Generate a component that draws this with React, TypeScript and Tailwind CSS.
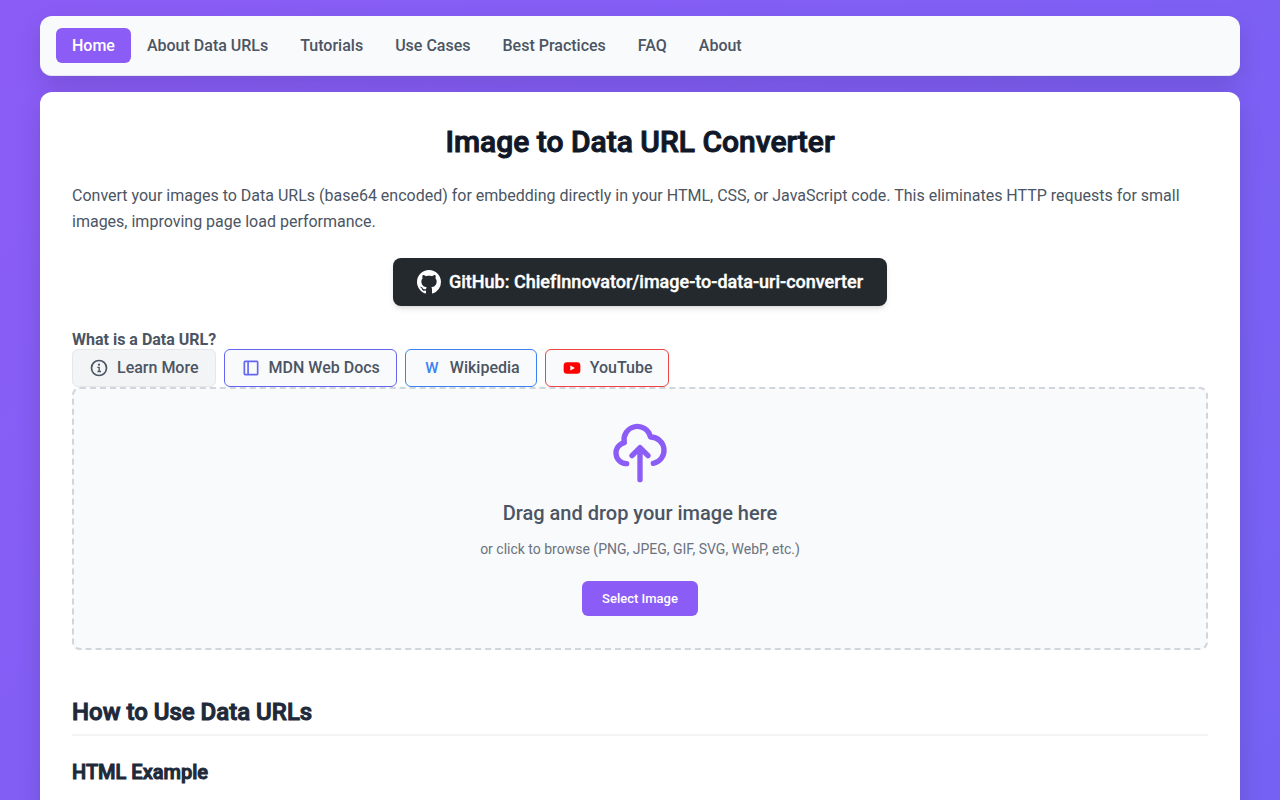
import React, { useRef, useState } from 'react';
import type { ChangeEvent, ReactNode } from 'react';

const navItems = [
  'Home',
  'About Data URLs',
  'Tutorials',
  'Use Cases',
  'Best Practices',
  'FAQ',
  'About',
];

const GithubIcon = () => (
  <svg className="size-6" viewBox="0 0 16 16" fill="currentColor" aria-hidden="true">
    <path d="M8 0C3.58 0 0 3.58 0 8c0 3.54 2.29 6.53 5.47 7.59.4.07.55-.17.55-.38 0-.19-.01-.82-.01-1.49-2.01.37-2.53-.49-2.69-.94-.09-.23-.48-.94-.82-1.13-.28-.15-.68-.52-.01-.53.63-.01 1.08.58 1.23.82.72 1.21 1.87.87 2.33.66.07-.52.28-.87.51-1.07-1.78-.2-3.64-.89-3.64-3.95 0-.87.31-1.59.82-2.15-.08-.2-.36-1.02.08-2.12 0 0 .67-.21 2.2.82.64-.18 1.32-.27 2-.27s1.36.09 2 .27c1.53-1.04 2.2-.82 2.2-.82.44 1.1.16 1.92.08 2.12.51.56.82 1.27.82 2.15 0 3.07-1.87 3.75-3.65 3.95.29.25.54.73.54 1.48 0 1.07-.01 1.93-.01 2.2 0 .21.15.46.55.38A8.01 8.01 0 0 0 16 8c0-4.42-3.58-8-8-8z" />
  </svg>
);

const InfoIcon = () => (
  <svg className="size-5" viewBox="0 0 24 24" fill="none" stroke="currentColor" strokeWidth="2" aria-hidden="true">
    <circle cx="12" cy="12" r="9" />
    <circle cx="12" cy="8" r="1.3" fill="currentColor" stroke="none" />
    <path d="M10 11.2h2.2v5M10.2 16.2h4.2" strokeWidth="1.6" />
  </svg>
);

const DocsIcon = () => (
  <svg className="size-5 text-[#6366f1]" viewBox="0 0 24 24" fill="none" stroke="currentColor" strokeWidth="2" aria-hidden="true">
    <rect x="4" y="4" width="16" height="16" rx="1" />
    <path d="M8.5 4v16" />
  </svg>
);

const WikipediaIcon = () => (
  <span className="w-5 text-center text-[15px] text-[#3b82f6]" aria-hidden="true">
    W
  </span>
);

const YoutubeIcon = () => (
  <svg className="size-5" viewBox="0 0 24 24" aria-hidden="true">
    <rect x="2" y="5" width="20" height="14" rx="4" fill="#ff0000" />
    <path d="M10 9l5.5 3-5.5 3z" fill="#ffffff" />
  </svg>
);

const UploadIcon = () => (
  <svg className="size-16 text-[#8b5cf6]" viewBox="0 0 24 24" fill="none" stroke="currentColor" strokeWidth="2" strokeLinecap="round" strokeLinejoin="round" aria-hidden="true">
    <path d="M7 16a4 4 0 0 1-.88-7.903A5 5 0 1 1 15.9 6L16 6a5 5 0 0 1 1 9.9M15 13l-3-3m0 0l-3 3m3-3v12" />
  </svg>
);

type ResourceLinkProps = {
  icon: ReactNode;
  label: string;
  className: string;
};

const ResourceLink = ({ icon, label, className }: ResourceLinkProps) => (
  <a
    href="#"
    className={`flex h-[38px] items-center gap-2 rounded-md border px-4 font-medium text-[#4b5563] ${className}`}
  >
    {icon}
    {label}
  </a>
);

const App = () => {
  const [fileName, setFileName] = useState('');
  const fileInputRef = useRef<HTMLInputElement>(null);

  const handleFileChange = (event: ChangeEvent<HTMLInputElement>) => {
    setFileName(event.target.files?.[0]?.name ?? '');
  };

  return (
    <div className="min-h-screen bg-[linear-gradient(135deg,#8b5cf6_0%,#6366f1_177%)] bg-fixed px-10 pt-4 font-['Roboto',sans-serif] text-[#4b5563]">
      <div className="mx-auto max-w-[1200px]">
        <nav className="mb-4 rounded-xl border-b border-gray-200 bg-gray-50 px-4 py-3 shadow-[0_10px_25px_rgba(0,0,0,0.12)]">
          <ul className="flex flex-wrap">
            {navItems.map((item, index) => (
              <li key={item}>
                <a
                  href="#"
                  className={
                    index === 0
                      ? 'block rounded-md bg-[#8b5cf6] px-4 py-2 leading-[19px] font-medium text-white'
                      : 'block rounded-md px-4 py-2 leading-[19px] font-medium text-[#4b5563]'
                  }
                >
                  {item}
                </a>
              </li>
            ))}
          </ul>
        </nav>

        <main className="rounded-xl bg-white p-8 shadow-[0_10px_25px_rgba(0,0,0,0.12)]">
          <h1 className="mb-6 text-center text-3xl leading-[35px] font-medium text-gray-900 [-webkit-text-stroke:1px]">
            Image to Data URL Converter
          </h1>
          <p className="mb-6 leading-[1.6]">
            Convert your images to Data URLs (base64 encoded) for embedding
            directly in your HTML, CSS, or JavaScript code. This eliminates
            HTTP requests for small images, improving page load performance.
          </p>

          <div className="mb-6 flex justify-center">
            <a
              href="#"
              className="flex h-12 items-center gap-2 rounded-lg bg-[#24292e] px-6 text-lg font-medium text-white shadow-md [-webkit-text-stroke:thin]"
            >
              <GithubIcon />
              GitHub: ChiefInnovator/image-to-data-uri-converter
            </a>
          </div>

          <p className="leading-[19px] font-bold">What is a Data URL?</p>
          <div className="flex flex-wrap gap-2">
            <ResourceLink
              icon={<InfoIcon />}
              label="Learn More"
              className="border-gray-200 bg-gray-100"
            />
            <ResourceLink
              icon={<DocsIcon />}
              label="MDN Web Docs"
              className="border-[#6366f1] bg-gray-50"
            />
            <ResourceLink
              icon={<WikipediaIcon />}
              label="Wikipedia"
              className="border-[#3b82f6] bg-gray-50"
            />
            <ResourceLink
              icon={<YoutubeIcon />}
              label="YouTube"
              className="border-[#ef4444] bg-gray-50"
            />
          </div>

          <div className="flex flex-col items-center rounded-lg border-2 border-dashed border-gray-300 bg-gray-50 p-8">
            <UploadIcon />
            <p className="mt-3 text-xl leading-8 font-medium">
              Drag and drop your image here
            </p>
            <p className="mt-2 mb-5 text-sm leading-6 text-[#6b7280]">
              {fileName || 'or click to browse (PNG, JPEG, GIF, SVG, WebP, etc.)'}
            </p>
            <input
              ref={fileInputRef}
              type="file"
              accept="image/*"
              aria-label="Image file"
              className="hidden"
              onChange={handleFileChange}
            />
            <button
              type="button"
              onClick={() => fileInputRef.current?.click()}
              className="rounded-md bg-[#8b5cf6] px-5 py-2 text-[13px] leading-[19px] font-medium text-white"
            >
              Select Image
            </button>
          </div>

          <h2 className="mt-12 mb-5 border-b-2 border-gray-100 pb-2 text-2xl leading-7 font-medium text-gray-800 [-webkit-text-stroke:1px]">
            How to Use Data URLs
          </h2>
          <h3 className="text-xl leading-8 font-medium text-gray-800 [-webkit-text-stroke:1px]">
            HTML Example
          </h3>
        </main>
      </div>
    </div>
  );
};

export default App;
